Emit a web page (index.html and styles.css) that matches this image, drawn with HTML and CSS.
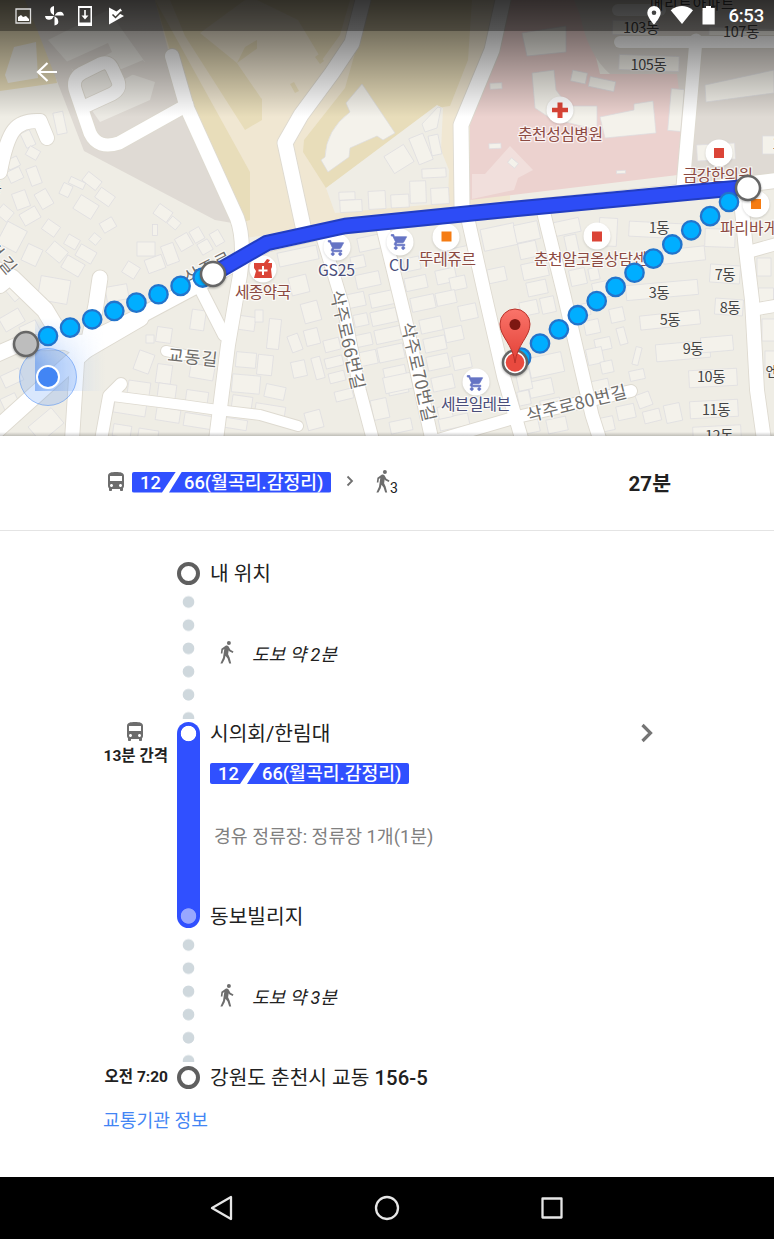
FILE: index.html
```html
<!DOCTYPE html>
<html lang="ko">
<head>
<meta charset="utf-8">
<title>대중교통 경로</title>
<link rel="stylesheet" href="styles.css">
</head>
<body>
<svg class="symbols" aria-hidden="true">
  <symbol id="bus" viewBox="3 1 18 21"><path d="M4 16c0 .88.39 1.67 1 2.22V20c0 .55.45 1 1 1h1c.55 0 1-.45 1-1v-1h8v1c0 .55.45 1 1 1h1c.55 0 1-.45 1-1v-1.78c.61-.55 1-1.34 1-2.22V6c0-3.500-3.580-4-8-4s-8 .5-8 4v10zm3.500 1c-.83 0-1.500-.67-1.500-1.500S6.670 14 7.500 14s1.500.67 1.500 1.500S8.330 17 7.500 17zm9 0c-.83 0-1.500-.67-1.500-1.500s.67-1.500 1.500-1.500 1.500.67 1.500 1.500-.67 1.500-1.500 1.500zm1.500-6H6V6h12v5z"/></symbol>
  <symbol id="walk" viewBox="0 0 14 23"><circle cx="8.900" cy="2" r="2"/><path d="M1.400 7.700L6 4.600Q8.300 4 9 6.300L10.400 8.700 13.500 10.600 12.700 12.100 9.200 10.200 8.700 9.300 8.100 13.200 9.600 16.500 11.200 22.500H9.200L7.600 17.400 5.500 14.700 4.700 18.200 2.400 22.500H.4L3 16.800 4.300 8.100 2.900 9 2.400 12.600H.8Z"/></symbol>
  <symbol id="cart" viewBox="0 0 24 24"><path d="M7 18c-1.100 0-2 .9-2 2s.9 2 2 2 2-.9 2-2-.9-2-2-2zM1 2v2h2l3.600 7.600L5.200 14c-.6 1.300.4 3 1.800 3h12v-2H7.400l1.100-2h7.500c.7 0 1.400-.4 1.700-1L21.500 5H5.200l-.9-3H1zm16 16c-1.100 0-2 .9-2 2s.9 2 2 2 2-.9 2-2-.9-2-2-2z"/></symbol>
</svg>

<section class="map">
  <svg class="map-canvas" viewBox="0 0 774 436" width="774" height="436">
    <defs>
      <linearGradient id="cone" x1="0" y1="0" x2="1" y2="0"><stop offset="0" stop-color="#4285f4" stop-opacity=".5"/><stop offset=".45" stop-color="#8ab4f8" stop-opacity=".28"/><stop offset="1" stop-color="#b6d2ff" stop-opacity="0"/></linearGradient>
      <linearGradient id="fade" x1="0" y1="0" x2="0" y2="1"><stop offset="0" stop-color="#fff" stop-opacity="0"/><stop offset=".6" stop-color="#fff"/></linearGradient>
      <mask id="coneMask"><rect x="30" y="318" width="80" height="76" fill="url(#fade)"/></mask>
      <linearGradient id="pin" x1="0" y1="0" x2="0" y2="1"><stop offset="0" stop-color="#fa746a"/><stop offset="1" stop-color="#e23f35"/></linearGradient>
    </defs>
    <rect width="774" height="436" fill="#efede5"/>
    <path fill="#e8ddba" d="M0 0H40L57 83 0 91Z"/>
    <path fill="#efede5" d="M14 47L36 42 38 78 8 83 5 75Z"/>
    <path fill="#dfdad4" d="M25 0H155L187 108 238 224 215 220 84 151 40 37Z"/>
    <path fill="#eceae4" d="M48 40L108 10 145 62 125 72 155 82 150 100 100 122 93 112 70 65Z"/>
    <path fill="#dfdad4" d="M66 62L108 43 112 52 75 72ZM112 73L143 60 148 66 116 84Z"/>
    <path fill="#f0e7d2" d="M155 0H510V200L245 238 180 95Z"/>
    <path fill="#e8ddba" d="M155 0L250 172V220L240 223 187 108Z"/>
    <path fill="#e8ddba" d="M170 0H245L200 33 237 63 262 98V120L245 130 185 36Z"/>
    <path fill="#e8ddba" d="M245 47L257 40V90L237 63Z"/>
    <path fill="#f0e7d2" d="M237 63L262 45 275 60V112L261 98Z"/>
    <path fill="#e8ddba" d="M370 0H472L468 60 450 106 443 107 326 188 303 152 304 140 345 88Z"/>
    <path fill="#e8ddba" d="M257 0H350L340 35 322 60 298 20ZM315 57l4-3 5 7-4 3zM290 84l4-2 5 9-4 2z"/>
    <path fill="#efede5" d="M326 188L437 105 443 108 441 150 449 170 448 203 335 213Z"/>
    <path fill="#ecd2cf" d="M505 0H582L600 74 690 74 686 174 470 200V125Z"/>
    <path fill="#f1dfdc" d="M472 174H485L510 146 533 170 518 178 514 190 472 199Z"/>
    <path fill="#dfdad4" d="M574 0H774V184L690 184 677 74H610Q588 55 580 15Z"/>
    <g class="building">
      <path d="M362 84L395 133 383 140 377 136 350 148 349 157 328 172 321 160 325 157Q326 130 350 112L346 103Z"/>
      <path d="M422 124L438 107 441 108 437 128 425 132Z"/>
      <path d="M532 73L554 70 556 90 568 106H597V130L550 118 535 108Z"/>
      <path d="M600 117L634 110V104L653 101 656 133 605 138Z"/>
      <path d="M522 33L566 26V52L527 56ZM705 85L774 70V93L706 102Z"/>
    </g>
    <g id="buildings" class="building"></g>

    <g id="streets"></g>

    <g class="road-label">
      <text transform="translate(167 361) rotate(6)" textLength="50">교동길</text>
      <text transform="translate(330 292) rotate(77)" textLength="101">삭주로66번길</text>
      <text transform="translate(401 324) rotate(77)" textLength="101">삭주로70번길</text>
      <text transform="translate(528 422) rotate(-14)" textLength="103">삭주로80번길</text>
      <text transform="translate(188 285) rotate(-27)" textLength="50">삭주로</text>
      <text transform="translate(-15 248) rotate(50)" textLength="36">번길</text>
    </g>
    <g class="block-label">
      <text x="692" y="9" textLength="84">메리트아파트</text>
      <text x="641" y="33">103동</text><text x="741" y="37">107동</text><text x="648.500" y="69.500">105동</text>
      <text x="659" y="232.500">1동</text><text x="725" y="279.500">7동</text><text x="659" y="298">3동</text>
      <text x="730" y="312.500">8동</text><text x="670" y="325">5동</text><text x="693" y="353.500">9동</text>
      <text x="711" y="382">10동</text><text x="716" y="414.500">11동</text><text x="719" y="441">12동</text>
      <text x="772" y="377">엔</text><text x="776" y="149">1</text><text x="-5" y="193">동</text>
    </g>

    <g class="poi" fill="#fff">
      <circle cx="560" cy="110" r="13.500"/><circle cx="719" cy="153" r="13.500"/><circle cx="597" cy="236" r="13.500"/>
      <circle cx="446" cy="237" r="13.500"/><circle cx="337" cy="247" r="13.500"/><circle cx="400" cy="242" r="13.500"/>
      <circle cx="476" cy="382" r="13.500"/><circle cx="263" cy="269" r="13.500"/><circle cx="756" cy="204" r="13.500"/>
    </g>
    <path fill="#db4437" d="M557.500 102.500h5v5.200h5.500v4.600h-5.500v5.700h-5v-5.700h-5.500v-4.600h5.500zM714 148h10v10h-10zM592 231.500h10v10h-10zM254 263h10l3-4 3 1-2 3h4v4l-1 2 1 9h-18l2-7-2-3z"/>
    <path stroke="#fff" stroke-width="2" d="M263 266v9M258.500 270.500h9"/>
    <path fill="#f57c13" d="M441.500 231.500h10v10h-10zM751 199h10v10h-10z"/>
    <g fill="#6574c4" stroke="#6574c4"><use href="#cart" x="327" y="239" width="19" height="18"/><use href="#cart" x="390" y="233" width="19" height="18"/><use href="#cart" x="466" y="374" width="19" height="18"/></g>
    <g class="poi-label">
      <text x="518" y="140" textLength="85">춘천성심병원</text>
      <text x="683" y="180.500" textLength="70">금강한의원</text>
      <text x="534" y="265" textLength="113">춘천알코올상담센</text>
      <text x="419" y="265" textLength="57">뚜레쥬르</text>
      <text x="235" y="298" textLength="56">세종약국</text>
      <text x="720" y="233.500">파리바게뜨</text>
    </g>
    <g class="poi-label poi-label--shop">
      <text x="318" y="275.500" textLength="37">GS25</text><text x="389" y="271" textLength="21">CU</text>
      <text x="441" y="410" textLength="70">세븐일레븐</text>
    </g>

    <rect x="35" y="318" width="70" height="73" fill="url(#cone)" mask="url(#coneMask)"/>
    <circle cx="48" cy="377" r="28.500" fill="#4285f4" fill-opacity=".2" stroke="#4285f4" stroke-opacity=".5"/>
    <circle cx="48" cy="377" r="11" fill="#4285f4" stroke="#fff" stroke-width="2"/>

    <g class="route">
      <path stroke="#223dc1" stroke-width="16.500" d="M213 274L267 243 345 226 514 209 748 187"/>
      <path stroke="#2d4cf6" stroke-width="12.500" d="M213 274L267 243 345 226 514 209 748 187"/>
    </g>
    <g id="footpath" class="footpath"></g>
    <g class="node">
      <circle cx="26" cy="344" r="12" fill="#bdbdbd"/><circle cx="213" cy="274" r="12" fill="#fff"/><circle cx="748" cy="188" r="12" fill="#fff"/>
      <circle cx="515" cy="362.500" r="12" fill="#fff"/>
    </g>
    <circle cx="515" cy="362.500" r="9.300" fill="#e94a3f"/>
    <path fill="url(#pin)" stroke="#b9322a" stroke-width="1" d="M515 363C513 344 500 337 500 324A15 15 0 0 1 530 324C530 337 517 344 515 363Z"/>
    <circle cx="515" cy="324.500" r="5.500" fill="#7d1712"/>
  </svg>
  <div class="map-shade"></div>
  <div class="map-top">
    <header class="statusbar">
      <svg width="112" height="22" viewBox="0 0 112 22" fill="#fff">
        <path fill="none" stroke="#ddd" stroke-width="1.300" d="M1 4h14.500v14H1z"/><path d="M3 16v-4l3-2 2 2 3-1 3 3v2z"/>
        <path d="M39 10.500V1Q34 2 35.500 6.500L36 8ZM39.500 10.500H49Q48 5.500 43.500 7L42 7.500ZM39.500 11V20.500Q44.500 19.500 43 15L42.500 13.500ZM39 11H30Q31 16 35.500 14.500L37 14Z"/>
        <path fill-rule="evenodd" d="M63 1h14v20H63zM64.500 3v14.500h11V3z"/><path d="M69.200 5h1.600v5.500h2.700L70 14.500l-3.500-4h2.700z"/>
        <path d="M94 2.500l7.500 4 4-3 1.500 2.500-3 2.300 5 2.700L94 19.500z"/><path d="M97.500 9.500l3 3 6-6" fill="none" stroke="#3b3935" stroke-width="1.500"/>
      </svg>
      <div class="status-right">
        <svg width="70" height="20" viewBox="0 0 70 20" fill="#fff"><path fill-rule="evenodd" d="M7 0a6.700 6.700 0 0 0-6.700 6.700C.3 11.500 7 18.500 7 18.500s6.700-7 6.700-11.800A6.700 6.700 0 0 0 7 0zm0 9a2.300 2.300 0 1 1 0-4.600A2.300 2.300 0 0 1 7 9z"/><path d="M35 18L23.700 4.200Q35-4.200 46 4.200z"/><path d="M55.500 2H59V0h5v2h3.700v16.500H55.500z"/></svg>
        <span>6:53</span>
      </div>
    </header>
    <svg class="back" width="22" height="20" viewBox="0 0 22 20"><path d="M21 10H2M11.500 1L2 10l9.500 9"/></svg>
  </div>
</section>

<section class="summary">
  <svg class="bus" width="18" height="21"><use href="#bus"/></svg>
  <div class="lines"><span class="line line--first">12</span><span class="line line--last">66(월곡리.감정리)</span></div>
  <svg class="sep" width="8" height="12" viewBox="0 0 8 12"><path d="M1.500 1.500L6 6l-4.500 4.500"/></svg>
  <svg class="walk" width="14" height="23"><use href="#walk"/></svg><span class="walk-min">3</span>
  <strong class="total">27분</strong>
</section>

<main class="trip">
  <div class="row row--end"><span></span><i class="ring"></i><span class="place">내 위치</span></div>
  <div class="row row--walk"><span></span><i class="dots"></i><div class="walk-info"><svg width="14" height="23"><use href="#walk"/></svg><em>도보 약 2분</em></div></div>
  <div class="row row--ride">
    <div class="headway"><svg width="18" height="21"><use href="#bus"/></svg><b>13분 간격</b></div>
    <i class="rail"></i>
    <div class="ride">
      <div class="stop"><span class="place">시의회/한림대</span><svg width="14" height="20" viewBox="0 0 14 20"><path d="M2.500 2l8 8-8 8"/></svg></div>
      <div class="lines"><span class="line line--first">12</span><span class="line line--last">66(월곡리.감정리)</span></div>
      <p class="via">경유 정류장: 정류장 1개(1분)</p>
      <span class="place place--off">동보빌리지</span>
    </div>
  </div>
  <div class="row row--walk"><span></span><i class="dots"></i><div class="walk-info"><svg width="14" height="23"><use href="#walk"/></svg><em>도보 약 3분</em></div></div>
  <div class="row row--end"><b class="time">오전 7:20</b><i class="ring"></i><span class="place">강원도 춘천시 교동 <span class="lot">156-5</span></span></div>
  <a class="agency">교통기관 정보</a>
</main>

<nav class="navbar">
  <svg width="24" height="26" viewBox="0 0 24 26"><path d="M21 2v22L2 13z"/></svg>
  <svg width="26" height="26" viewBox="0 0 26 26"><circle cx="13" cy="13" r="11"/></svg>
  <svg width="24" height="26" viewBox="0 0 24 26"><rect x="2.500" y="3.500" width="19" height="19"/></svg>
</nav>
<script src="map.js"></script>
</body>
</html>
```

FILE: styles.css
```css
* { box-sizing: border-box; }
body {
  margin: 0;
  width: 774px;
  height: 1239px;
  display: flex;
  flex-direction: column;
  overflow: hidden;
  background: #fff;
  color: #212121;
  font-family: Roboto, "Noto Sans CJK KR", sans-serif;
}
.symbols { position: absolute; width: 0; height: 0; }
svg { display: block; flex: none; }

/* Map */
.map { position: relative; height: 436px; flex: none; overflow: hidden; }
.map-shade {
  position: absolute;
  inset: 0;
  background:
    linear-gradient(rgba(0,0,0,.68), rgba(0,0,0,0)) 0 0 / 100% 117px no-repeat,
    linear-gradient(rgba(0,0,0,0), rgba(0,0,0,.2)) 0 100% / 100% 4px no-repeat;
}
.map-top { position: absolute; inset: 0 0 auto; }
.building { fill: #f4f2eb; stroke: #dddce0; stroke-width: .7; }
.street { fill: none; stroke-linecap: round; stroke-linejoin: round; }
.road-label, .block-label, .poi-label {
  font-family: "Noto Sans CJK KR", sans-serif;
  paint-order: stroke;
  stroke: rgba(255,255,255,.7);
  stroke-width: 2.5px;
  stroke-linejoin: round;
}
.road-label { font-size: 17.5px; fill: #6e6c69; }
.block-label { font-size: 14.5px; fill: #454545; text-anchor: middle; letter-spacing: -.4px; stroke: rgba(255,255,255,.25); }
.poi-label { font-size: 15.8px; fill: #8c4a42; }
.poi-label--shop { fill: #4a4d7a; }
.poi-label text, .road-label text { text-anchor: start; }
.poi { filter: drop-shadow(0 1px 1px rgba(0,0,0,.15)); }
.node { stroke: #666; stroke-width: 2.5; filter: drop-shadow(0 1px 1px rgba(0,0,0,.3)); }
.route path { fill: none; stroke-linejoin: round; }
.footpath circle { fill: #00aeff; stroke: #2374cb; stroke-width: 2.3; }

.statusbar {
  height: 31px;
  padding: 0 10px 0 15px;
  display: flex;
  align-items: center;
  justify-content: space-between;
  background: rgba(0,0,0,.34);
}
.status-right { display: flex; align-items: center; gap: 11px; color: #fff; font-size: 18.5px; font-weight: 500; line-height: 31px; }
.status-right span { padding-top: 2px; letter-spacing: -.2px; }
.back { margin: 31px 0 0 36px; fill: none; stroke: #fff; stroke-width: 2.2; }

/* Route summary */
.summary {
  flex: none;
  height: 95px;
  display: flex;
  align-items: center;
  padding: 0 103px 2px 107px;
  border-bottom: 1px solid #e4e4e4;
}
.bus, .walk, .headway svg, .walk-info svg { fill: #6d6d6d; }
.bus { margin: -2px 7px 0 0; }
.lines { display: flex; width: 199px; height: 21px; }
.line {
  background: #3050ff;
  color: #fff;
  font-size: 18.3px;
  font-weight: 500;
  line-height: 21px;
  height: 21px;
  white-space: nowrap;
}
.line--first { width: 44px; padding-left: 8px; border-radius: 2px 0 0 2px; clip-path: polygon(0 0, 100% 0, 30px 100%, 0 100%); }
.line--last { width: 162px; margin-left: -7px; padding-left: 15px; border-radius: 0 2px 2px 0; clip-path: polygon(13px 0, 100% 0, 100% 100%, 0 100%); }
.sep { margin: -2px 0 0 15px; fill: none; stroke: #707070; stroke-width: 1.8; }
.walk { margin: -1px 0 0 22px; }
.walk-min { font-size: 14px; margin: 12px 0 0 0; }
.total { margin-left: auto; font-size: 20.5px; font-weight: 700; }

/* Itinerary */
.trip { flex: 1; padding-top: 30px; }
.row { display: grid; grid-template-columns: 168px 23px 1fr; column-gap: 9px; }
.row--end { height: 24px; align-items: center; }
.ring { width: 23px; height: 23px; border: 4px solid #5f5f5f; border-radius: 50%; }
.place { position: relative; top: 1px; padding-left: 1px; font-size: 20.3px; line-height: 24px; white-space: nowrap; }
.lot { font-weight: 500; letter-spacing: .1px; }
.row--walk { height: 137px; }
.dots {
  height: 134px;
  background: radial-gradient(circle at 50% 17px, #cfd8dd 5.4px, transparent 6.2px) 0 0 / 23px 23.2px repeat-y;
}
.walk-info { display: flex; align-items: center; gap: 18px; padding-left: 11px; height: 135px; }
.walk-info em { font-size: 18px; }
.row--ride { height: 206px; }
.rail {
  border-radius: 12px;
  background:
    radial-gradient(circle at 11.500px 11.500px, #fff 7.3px, transparent 8.1px),
    radial-gradient(circle at 11.500px 194px, #98a7ff 7.3px, transparent 8.1px),
    #3050ff;
}
.headway { display: flex; flex-direction: column; align-items: flex-end; }
.headway svg { margin: -1px 24px 4px 0; }
.headway b, .time { font-size: 15.5px; line-height: 20px; text-align: right; white-space: nowrap; }
.ride { display: flex; flex-direction: column; align-items: flex-start; padding-left: 1px; }
.ride .place { padding-left: 0; }
.stop { display: flex; align-items: center; width: 444px; justify-content: space-between; height: 22px; }
.stop svg { fill: none; stroke: #757575; stroke-width: 3.2; }
.ride .lines { margin-top: 19px; }
.via { margin: 40px 0 0 4px; font-size: 18.3px; line-height: 26px; color: #808080; white-space: nowrap; }
.place--off { margin-top: 54px; }
.agency { display: block; margin: 19px 0 0 103px; font-size: 18.2px; line-height: 26px; color: #4285f4; }

/* System navigation */
.navbar {
  flex: none;
  height: 62px;
  background: #000;
  display: flex;
  align-items: center;
  justify-content: center;
  gap: 140px;
}
.navbar svg { fill: none; stroke: #e6e6e6; stroke-width: 2.3; stroke-linejoin: round; }
```

FILE: map.js
```js
const NS = "http://www.w3.org/2000/svg";
function add(parent, tag, attrs) {
  const node = document.createElementNS(NS, tag);
  for (const key in attrs) node.setAttribute(key, attrs[key]);
  parent.appendChild(node);
}

// center x, center y, width, height, rotation in degrees
const buildings = [
  [28,139,10,16,-25],[33,153,12,10,30],[13,163,12,10,-25],[15,175,14,12,-25],[34,176,11,18,-20],[21,200,14,17,-20],
  [44,199,13,17,-30],[66,190,10,12,25],[77,183,16,7,25],[92,181,17,11,38],[105,197,17,12,35],[86,207,21,16,32],
  [60,123,10,22,-12],[5,213,14,12,40],[30,216,18,13,-30],[163,213,16,12,35],[12,237,22,24,28],[32,255,16,18,25],
  [51,228,15,12,35],[108,225,14,11,-30],[155,230,5,11,0],[174,223,11,9,40],[95,239,9,9,40],[72,242,13,11,30],
  [57,252,18,14,40],[86,254,18,13,30],[73,266,20,14,30],[146,249,18,14,0],[170,254,13,20,-20],[184,242,14,14,-30],
  [197,235,11,13,-30],[205,247,12,12,-30],[217,238,10,14,-30],[155,264,18,14,-20],[131,270,14,13,32],[117,293,22,15,-10],
  [54,290,30,24,10],[18,290,20,14,-40],[35,300,18,14,30],[12,320,22,15,-30],[30,330,18,14,-25],[12,378,20,13,-25],
  [10,402,16,13,-25],[46,425,30,20,-40],[198,320,14,20,8],[164,335,15,15,8],[150,339,8,8,0],[144,362,16,20,20],
  [164,374,15,19,8],[202,372,24,14,10],[244,323,22,14,8],[246,360,20,15,5],[246,384,28,18,5],[139,388,22,13,8],
  [167,391,18,14,8],[197,397,22,12,8],[242,403,20,14,8],[130,408,32,13,9],[168,415,24,13,9],[198,421,28,13,9],
  [122,431,18,12,9],[148,436,20,13,9],[236,424,22,10,9],[298,256,40,14,-12],[299,285,18,18,-14],[311,312,17,20,-15],
  [274,334,12,30,6],[312,337,14,16,-14],[295,343,11,17,-20],[265,365,15,20,6],[299,369,14,16,-12],[318,368,9,22,-15],
  [275,392,20,13,12],[270,411,30,12,9],[314,420,16,18,-15],[259,316,8,12,0],[344,395,18,10,-14],[332,345,16,12,-14],
  [334,362,18,10,-14],[337,377,16,10,-14],[370,243,24,14,-12],[358,262,14,12,-12],[368,280,24,14,-12],[356,300,18,14,-12],
  [382,299,24,14,-12],[384,317,26,14,-12],[388,335,26,14,-12],[391,353,26,15,-12],[395,373,22,13,-12],[398,388,20,12,-12],
  [380,409,16,20,-12],[401,426,22,12,-12],[361,320,14,12,-12],[364,340,16,12,-12],[368,358,18,14,-12],[412,264,16,13,-12],
  [416,283,22,13,-12],[423,303,24,14,-12],[431,325,22,14,-12],[435,344,22,14,-12],[438,362,22,14,-12],[443,383,22,14,-12],
  [398,383,28,16,-12],[454,422,30,12,-12],[446,276,20,14,-12],[458,283,16,13,-12],[446,298,20,13,-12],[468,312,18,15,-12],
  [454,334,18,14,-12],[462,362,18,14,-12],[445,412,14,12,-12],[499,237,34,22,-12],[497,275,18,14,-12],[461,254,24,14,-12],
  [527,232,24,18,-12],[528,250,18,16,-12],[535,270,26,16,-12],[537,288,20,14,-12],[529,308,18,14,-12],[548,305,14,16,-12],
  [546,365,34,20,-12],[541,388,24,16,-12],[524,380,14,20,-12],[524,398,12,14,-12],[551,406,20,14,-12],[530,426,18,14,-12],
  [557,425,20,14,-12],[567,227,26,14,-12],[608,232,18,28,3],[572,246,12,22,-12],[578,277,16,16,-12],[594,274,10,12,-12],
  [601,290,16,16,-12],[583,310,14,12,-12],[617,315,14,14,-12],[592,327,15,14,-12],[603,344,16,12,-12],[622,336,8,17,-15],
  [595,356,16,16,-12],[607,367,12,12,-12],[637,356,6,18,14],[637,375,15,10,-12],[600,386,18,12,-12],[644,400,14,14,-20],
  [652,416,17,12,-14],[673,413,16,18,-12],[626,412,18,14,-12],[607,424,14,14,-12],[656,230,54,15,3],[720,238,30,18,2],
  [684,255,42,14,-6],[662,290,72,15,-5],[670,320,60,14,-6],[683,351,54,17,-5],[717,344,32,15,-5],[713,378,48,17,-3],
  [714,409,48,17,-3],[717,433,48,14,-3],[725,274,30,18,4],[729,307,28,16,4],[764,267,14,18,0],[766,296,15,16,0],
  [770,330,16,22,0],[772,362,14,22,0],[399,159,23,20,-32],[421,149,15,28,-22],[435,145,10,20,-12],[434,173,24,9,-3],
  [347,196,16,8,-2],[351,206,22,12,-3],[377,200,17,18,-3],[400,201,18,13,-3],[418,192,16,22,-2],[440,196,18,16,-3],
  [579,77,15,11,12],[602,84,26,10,12],[676,110,13,42,5],[649,63,60,15,2],[496,86,12,6,-3],[495,146,12,5,-3],
  [621,172,9,3,-3],[716,152,38,16,-3],[770,145,15,18,0],[635,28,45,14,2],[742,34,66,12,2],[513,163,9,6,40]
];
const layer = document.getElementById("buildings");
for (const [cx, cy, w, h, a] of buildings)
  add(layer, "rect", { x: cx - w / 2, y: cy - h / 2, width: w, height: h, transform: `rotate(${a} ${cx} ${cy})` });

// stroke width, centre line
const streets = [
  [14,"M47 138L40 121Q22 120 14 130T0 172"],
  [14,"M172 56L187 108 237 218Q245 240 240 275L228 345 216 440"],
  [13,"M187 105L119 143Q98 150 90 133L76 92Q71 79 82 73L100 64Q109 60 113 70L118 81Q121 89 112 94L88 105"],
  [15,"M363 0L352 43 332 73 301 115 285 143 303 226"],
  [15,"M503 0L492 50 461 125 462 206"],
  [13,"M696 40L683 186"],[12,"M620 42H780"],[12,"M618 10H660"],
  [15,"M-5 355L22 343 85 342 140 316 200 284 240 260 267 244 345 226 514 209 690 191 780 180"],
  [17,"M-6 432L85 350 140 318"],[17,"M-4 270L12 278 45 310 63 340 85 350"],[14,"M0 286L10 278"],
  [14,"M77 362L72 440"],[15,"M100 278L96 305 88 345"],[12,"M200 288L224 335"],[10,"M166 351L185 355"],
  [12,"M121 384L109 396 101 440"],[10,"M112 396L183 405 218 410 260 415 298 426"],
  [12,"M322 236L343 305 360 391 373 440"],[13,"M383 228L405 318 432 440"],[13,"M467 215L484 291 504 378 522 440"],
  [12,"M438 440L517 417 631 391"],[13,"M543 210L564 295 592 415 600 440"],
  [14,"M740 190L746 250 752 300 757 390 764 440"],[12,"M748 252L780 243"],[12,"M752 310L780 305"]
];
const roads = document.getElementById("streets");
for (const [w, d] of streets) add(roads, "path", { class: "street", d, stroke: "#dedad0", "stroke-width": w + 1.8 });
for (const [w, d] of streets) add(roads, "path", { class: "street", d, stroke: "#fff", "stroke-width": w });

const footpath = document.getElementById("footpath");
for (let i = 7; i >= 0; i--) add(footpath, "circle", { cx: 48 + i * 22.1, cy: 336 - i * 8.35, r: 9.2 });
for (let i = 11; i >= 0; i--) add(footpath, "circle", { cx: 729 - i * 18.9, cy: 202 + i * 14.15, r: 9.2 });
```
